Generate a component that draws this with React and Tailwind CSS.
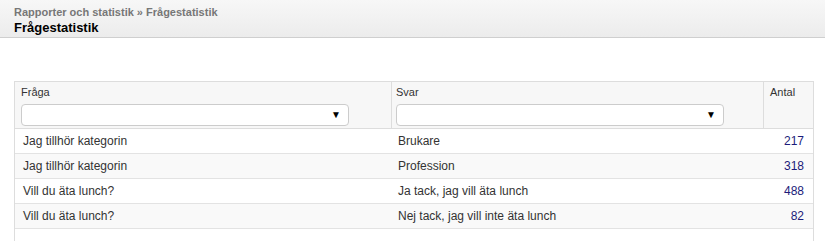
import React from "react"

const rows = [
  { q: "Jag tillhör kategorin", a: "Brukare", n: 217 },
  { q: "Jag tillhör kategorin", a: "Profession", n: 318 },
  { q: "Vill du äta lunch?", a: "Ja tack, jag vill äta lunch", n: 488 },
  { q: "Vill du äta lunch?", a: "Nej tack, jag vill inte äta lunch", n: 82 },
]

const Select = ({ width }) => (
  <div className={`h-[22px] ${width} rounded-[4px] border border-[#cccccc] bg-white flex items-center justify-end pr-[7px]`}>
    <span className="text-[10px] leading-none text-black">▼</span>
  </div>
)

export default function App() {
  return (
    <div className="bg-white min-h-[241px] font-['Liberation_Sans',Arial,sans-serif] text-[#333]">
      {/* Page header */}
      <div className="h-[38px] border-b border-[#cfcfcf] bg-gradient-to-b from-[#f7f7f7] to-[#ececec] px-[14px] pt-[6px]">
        <div className="text-[11px] leading-[13px] font-bold text-[#777]">Rapporter och statistik » Frågestatistik</div>
        <div className="text-[13px] leading-[16px] font-bold text-black mt-[1px]">Frågestatistik</div>
      </div>

      {/* Stats table */}
      <div className="ml-[14px] mt-[43px] w-[800px] h-[160px] border border-[#dddddd] border-b-0">
        <div className="flex h-[47px] bg-[#f7f7f7] border-b border-[#dddddd] text-[11px]">
          <div className="w-[377px] border-r border-[#dddddd] pl-[6px] pt-[3px]">
            <div className="leading-[14px] mb-[5px]">Fråga</div>
            <Select width="w-[328px]" />
          </div>
          <div className="w-[372px] border-r border-[#dddddd] pl-[4px] pt-[3px]">
            <div className="leading-[14px] mb-[5px]">Svar</div>
            <Select width="w-[328px]" />
          </div>
          <div className="flex-1 pl-[6px] pt-[3px] leading-[14px]">Antal</div>
        </div>
        {rows.map((r, i) => (
          <div
            key={i}
            className={`flex h-[25px] items-center border-b border-[#e3e3e3] text-[12px] ${i % 2 ? "bg-[#f9f9f9]" : "bg-white"}`}
          >
            <div className="w-[377px] pl-[8px]">{r.q}</div>
            <div className="w-[372px] pl-[6px]">{r.a}</div>
            <div className="flex-1 text-right pr-[9px] text-[#1c1c7a]">{r.n}</div>
          </div>
        ))}
      </div>
    </div>
  )
}
